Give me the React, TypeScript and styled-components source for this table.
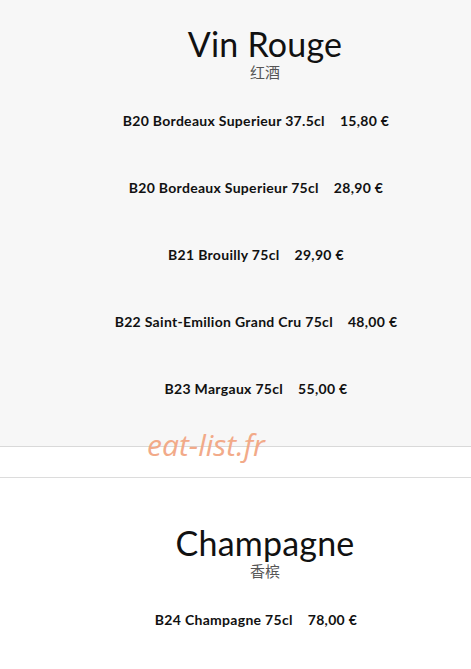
import React from "react";
import styled, { createGlobalStyle } from "styled-components";

const Global = createGlobalStyle`
  html, body { margin: 0; padding: 0; background: #ffffff; }
  body { font-family: "Lato", "Noto Sans CJK SC", sans-serif; color: #111; }
`;

const Page = styled.div`
  position: relative;
  width: 471px;
  min-height: 669px;
  background: #ffffff;
  overflow: hidden;
`;

const Section = styled.section<{ $grey?: boolean; $top: number; $bottom: number }>`
  display: flex;
  flex-direction: column;
  align-items: center;
  padding: ${(p) => p.$top}px 0 ${(p) => p.$bottom}px 59px;
  background: ${(p) => (p.$grey ? "#f7f7f7" : "#ffffff")};
  border-bottom: ${(p) => (p.$grey ? "1px solid #d9d9d9" : "none")};
`;

const Band = styled.div`
  height: 30px;
  background: #ffffff;
  border-bottom: 1px solid #dcdcdc;
`;

const Title = styled.h2`
  margin: 0;
  font-family: "Lato", sans-serif;
  font-weight: 400;
  font-size: 34px;
  line-height: 34px;
  color: #111;
  letter-spacing: 0.2px;
`;

const Sub = styled.div`
  margin-top: 3px;
  font-family: "Noto Sans CJK SC", sans-serif;
  font-size: 15px;
  line-height: 16px;
  color: #555;
`;

const List = styled.ul`
  list-style: none;
  margin: 7px 0 0;
  padding: 0 18px 0 0;
  display: flex;
  flex-direction: column;
  align-items: center;
`;

const Row = styled.li`
  height: 67px;
  display: flex;
  align-items: center;
  gap: 15px;
  font-family: "Lato", sans-serif;
  font-weight: 700;
  font-size: 14px;
  letter-spacing: 0.3px;
  color: #111;
  white-space: nowrap;
`;

const Watermark = styled.div`
  position: absolute;
  left: 147px;
  top: 425px;
  font-family: "Open Sans", sans-serif;
  font-style: italic;
  font-size: 30px;
  line-height: 40px;
  color: #f2a683;
  opacity: 0.95;
`;

type Item = { name: string; price: string };

const rouge: Item[] = [
  { name: "B20 Bordeaux Superieur 37.5cl", price: "15,80 €" },
  { name: "B20 Bordeaux Superieur 75cl", price: "28,90 €" },
  { name: "B21 Brouilly 75cl", price: "29,90 €" },
  { name: "B22 Saint-Emilion Grand Cru 75cl", price: "48,00 €" },
  { name: "B23 Margaux 75cl", price: "55,00 €" },
];

const champagne: Item[] = [{ name: "B24 Champagne 75cl", price: "78,00 €" }];

const Items = ({ items }: { items: Item[] }) => (
  <List>
    {items.map((it, i) => (
      <Row key={i}>
        <span>{it.name}</span>
        <span>{it.price}</span>
      </Row>
    ))}
  </List>
);

export default function App() {
  return (
    <Page>
      <Global />
      <Section $grey $top={27} $bottom={24}>
        <Title>Vin Rouge</Title>
        <Sub>红酒</Sub>
        <Items items={rouge} />
      </Section>
      <Band />
      <Section $top={48} $bottom={20}>
        <Title>Champagne</Title>
        <Sub>香槟</Sub>
        <Items items={champagne} />
      </Section>
      <Watermark>eat-list.fr</Watermark>
    </Page>
  );
}
